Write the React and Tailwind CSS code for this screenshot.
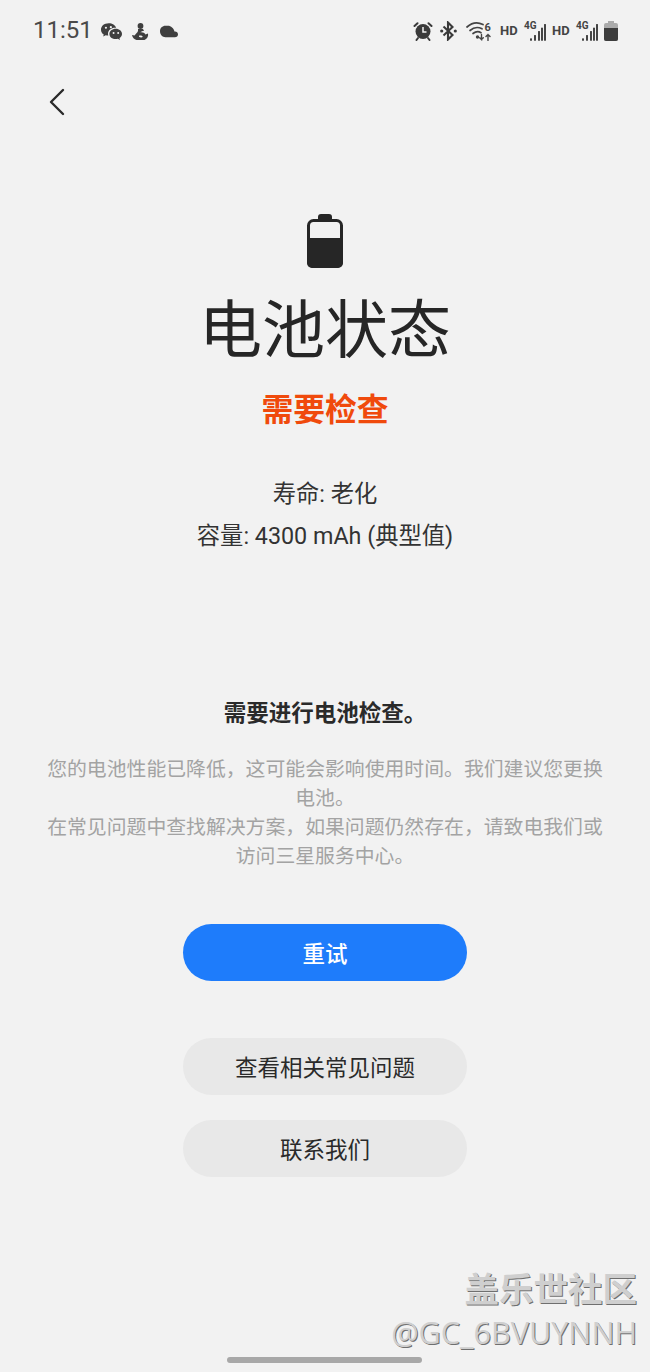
import React from "react";

const cjk = { fontFamily: '"Noto Sans CJK SC", sans-serif' };
const mixed = { fontFamily: 'Roboto, "Noto Sans CJK SC", sans-serif' };

function Wechat() {
  return (
    <svg width="21" height="18" viewBox="1 1 19.200 15.800" fill="#3f3f3f" className="block">
      <path d="M8 1C3.900 1 1 3.600 1 6.800c0 1.800 1 3.400 2.500 4.400L3 13l2.300-1.100c.8.200 1.600.300 2.400.300-.2-.6-.3-1.100-.3-1.700C7.400 7.400 10.200 5 14 5c.3 0 .6 0 .8.100C14.100 2.700 11.400 1 8 1z" />
      <path d="M14.500 6C11.200 6 8.700 8.100 8.700 10.700s2.500 4.700 5.800 4.700c.6 0 1.300-.1 1.900-.3l2 1.100-.5-1.700c1.400-.9 2.300-2.300 2.300-3.800C20.200 8.100 17.700 6 14.500 6z" />
      <circle cx="5.500" cy="5" r="1" fill="#f2f2f2" />
      <circle cx="10" cy="4.500" r="1" fill="#f2f2f2" />
      <circle cx="12.500" cy="9.800" r=".9" fill="#f2f2f2" />
      <circle cx="16.700" cy="9.800" r=".9" fill="#f2f2f2" />
    </svg>
  );
}

function Qq() {
  return (
    <svg width="18" height="18" viewBox="0 0 18 18" fill="#3f3f3f" className="block">
      <circle cx="8.500" cy="3" r="2.900" />
      <path d="M6 6h5l1 2c-2 0-3 .5-3.500 1.500 2-.5 4 .5 5 2l2.500-1c.5 2.500-.5 5-3.500 6.500H4.500C2 16.500.5 14.500 0 12l2.500.5c1-1.500 3-3 3.500-4.500z" />
      <path d="M7 12.800c1.500-.6 3-.3 3.800 1-.8 1-2.400 1-3.800 0z" fill="#f2f2f2" />
    </svg>
  );
}

function Cloud() {
  return (
    <svg width="18" height="13" viewBox="1 1 18.200 11.500" fill="#3f3f3f" className="block">
      <path d="M6.500 1C3.400 1 1 3.300 1 6.500 1 9.700 3.400 12.500 6.500 12.500h9.500c2 0 3.200-1.200 3.200-2.800 0-1.700-1.300-2.900-3-2.900h-.6C15 3.500 12 1 9 1z" />
    </svg>
  );
}

function Alarm() {
  return (
    <svg width="20" height="20" viewBox="0 0 20 20" className="block">
      <circle cx="10" cy="10.500" r="7.500" fill="#3a3a3a" />
      <path d="M1.500 5 4.500 2.200M18.500 5 15.500 2.200M5 17l-1.500 2M15 17l1.500 2" stroke="#3a3a3a" strokeWidth="2" strokeLinecap="round" />
      <path d="M10 6v5h3.500" stroke="#f2f2f2" strokeWidth="1.500" fill="none" />
    </svg>
  );
}

function Bluetooth() {
  return (
    <svg width="17" height="20" viewBox="0 0 17 20" fill="none" className="block">
      <path d="M3.500 5.500 12.500 14l-4.500 4.500v-17L12.500 6l-9 8.500" stroke="#3a3a3a" strokeWidth="2.100" />
      <circle cx="1.700" cy="10" r="1.600" fill="#3a3a3a" />
      <circle cx="15.300" cy="10" r="1.600" fill="#3a3a3a" />
    </svg>
  );
}

function Wifi() {
  return (
    <svg width="25" height="20" viewBox="0 0 25 20" fill="none" stroke="#444" strokeLinecap="round" className="block">
      <path d="M1 6C6 1.500 12 1 17 3.500" strokeWidth="1.700" />
      <path d="M4 9.500C8 6 12.500 6 16 7.800" strokeWidth="1.700" />
      <path d="M7 12.500c3-2.200 6-2 8-.8" strokeWidth="1.700" />
      <circle cx="11.500" cy="16" r="1.700" fill="#444" stroke="none" />
      <path d="M15.500 13.500v5l-1.800-1.800M15.500 18.500l1.800-1.800M22 19.500v-6M20 15.500 22 13.500l2 2" strokeWidth="1.400" />
      <text x="18.500" y="10" fontSize="11" fontWeight="700" fill="#444" stroke="none" fontFamily="Roboto, sans-serif">6</text>
    </svg>
  );
}

function Signal() {
  return (
    <span className="relative block h-[20px] w-[22px]">
      <span className="absolute left-0 top-[0px] text-[10px] leading-[9px] font-bold text-[#444]">4G</span>
      <svg width="22" height="20" viewBox="0 0 22 20" fill="#444" className="block">
        <rect x="6" y="17.400" width="2" height="2.300" />
        <rect x="10" y="14.100" width="2" height="5.600" />
        <rect x="14" y="10.100" width="2" height="9.600" />
        <rect x="17" y="6.700" width="2" height="13" />
        <rect x="20" y="3.100" width="2" height="16.600" />
      </svg>
    </span>
  );
}

function SmallBattery() {
  return (
    <svg width="14" height="20" viewBox="0 0 14 20" className="block">
      <path d="M4 0h6v2h2a2 2 0 0 1 2 2v14a2 2 0 0 1-2 2H2a2 2 0 0 1-2-2V4a2 2 0 0 1 2-2h2z" fill="#ababab" />
      <path d="M0 7h14v11a2 2 0 0 1-2 2H2a2 2 0 0 1-2-2z" fill="#3d3d3d" />
    </svg>
  );
}

function BigBattery() {
  return (
    <svg width="36" height="54" viewBox="0 0 36 54" className="block">
      <path d="M11 3a3 3 0 0 1 3-3h8a3 3 0 0 1 3 3v3H11z" fill="#262626" />
      <rect x="1.500" y="6.500" width="33" height="46" rx="5" fill="#f2f2f2" stroke="#262626" strokeWidth="3" />
      <path d="M0 24h36v25a5 5 0 0 1-5 5H5a5 5 0 0 1-5-5z" fill="#262626" />
    </svg>
  );
}

function Pill({ children, primary }) {
  return (
    <button
      className={
        primary
          ? "h-[57px] w-[284px] rounded-full bg-[#1e7cfb] text-[22.500px] font-medium text-white"
          : "h-[57px] w-[284px] rounded-full bg-[#e8e8e8] text-[22.500px] text-[#2a2a2a]"
      }
    >
      {children}
    </button>
  );
}

export default function App() {
  return (
    <div className="relative h-[1372px] w-[650px] overflow-hidden bg-[#f2f2f2]" style={cjk}>
      <header className="flex h-[60px] items-center justify-between pl-[33px] pr-[32px]">
        <div className="flex items-center">
          <span className="mr-[8px] text-[24px] text-[#4a4a4a]" style={{ fontFamily: "Roboto, sans-serif" }}>11:51</span>
          <span className="mr-[10px] mt-[3px]"><Wechat /></span>
          <span className="mr-[10px] mt-[3px]"><Qq /></span>
          <span className="mt-[3px]"><Cloud /></span>
        </div>
        <div className="mt-[2px] flex items-center text-[#444]" style={{ fontFamily: "Roboto, sans-serif" }}>
          <span className="mr-[7px]"><Alarm /></span>
          <span className="mr-[9px]"><Bluetooth /></span>
          <span className="mr-[9px]"><Wifi /></span>
          <span className="mr-[7px] w-[17px] text-[13px] font-bold">HD</span>
          <span className="mr-[6px]"><Signal /></span>
          <span className="mr-[7px] w-[17px] text-[13px] font-bold">HD</span>
          <span className="mr-[6px]"><Signal /></span>
          <SmallBattery />
        </div>
      </header>

      <div className="pl-[49px] pt-[28px]">
        <svg width="16" height="28" viewBox="0 0 16 28" fill="none" className="block">
          <path d="M14 2 2 14l12 12" stroke="#2a2a2a" strokeWidth="2.400" strokeLinecap="round" strokeLinejoin="round" />
        </svg>
      </div>

      <main className="flex flex-col items-center">
        <div className="mt-[98px]"><BigBattery /></div>
        <h1 className="mt-[11px] text-[63px] leading-[92px] font-normal text-[#262626]">电池状态</h1>
        <p className="mt-[13px] text-[31.800px] leading-[46px] font-bold text-[#f04a0c]">需要检查</p>
        <p className="mt-[43px] text-[23.300px] leading-[42px] text-[#333]" style={mixed}>寿命: 老化</p>
        <p className="text-[23.300px] leading-[42px] text-[#333]" style={mixed}>容量: 4300 mAh (典型值)</p>
        <p className="mt-[138px] text-[22.500px] leading-[32px] font-bold text-[#2a2a2a]">需要进行电池检查。</p>
        <p className="mt-[26px] w-[570px] text-center text-[19.850px] leading-[29px] text-[#a3a3a3]">
          您的电池性能已降低，这可能会影响使用时间。我们建议您更换电池。
          <br />
          在常见问题中查找解决方案，如果问题仍然存在，请致电我们或访问三星服务中心。
        </p>
        <div className="mt-[55px]"><Pill primary>重试</Pill></div>
        <div className="mt-[57px]"><Pill>查看相关常见问题</Pill></div>
        <div className="mt-[25px]"><Pill>联系我们</Pill></div>
      </main>

      <div className="absolute bottom-[9px] left-[227px] h-[6px] w-[195px] rounded-full bg-[#a8a8a8]" />

      <div className="absolute right-[13px] top-[1267px] text-[34.500px] leading-[40px] font-bold text-[#cfcfcf] [text-shadow:1px_1px_0_#6f6f6f]">盖乐世社区</div>
      <div className="absolute right-[13px] top-[1314px] text-[30.600px] leading-[36px] text-[#cfcfcf] [text-shadow:1px_1px_0_#6f6f6f]" style={{ fontFamily: '"Open Sans", sans-serif' }}>@GC_6BVUYNNH</div>
    </div>
  );
}
